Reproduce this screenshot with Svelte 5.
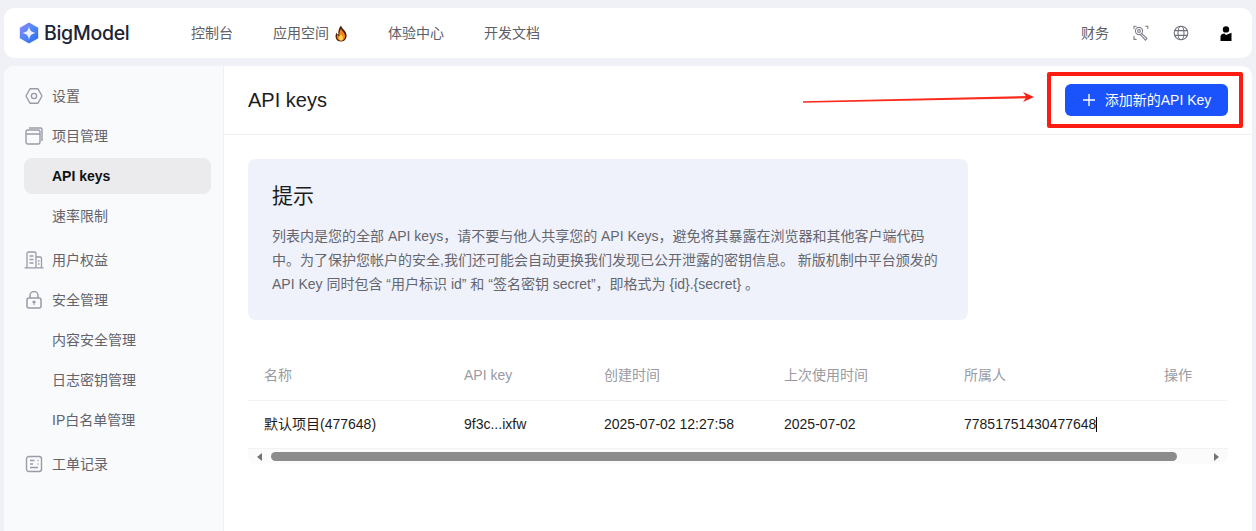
<script lang="ts">
  const nav = ["控制台", "应用空间", "体验中心", "开发文档"];
  const columns = [
    { label: "名称", value: "默认项目(477648)", width: 200 },
    { label: "API key", value: "9f3c...ixfw", width: 140 },
    { label: "创建时间", value: "2025-07-02 12:27:58", width: 180 },
    { label: "上次使用时间", value: "2025-07-02", width: 180 },
    { label: "所属人", value: "77851751430477648", width: 200 },
    { label: "操作", value: "", width: 80 },
  ];
</script>

<div class="page">
  <header class="topbar">
    <div class="logo">
      <svg width="20" height="22" viewBox="0 0 20 22">
        <defs>
          <linearGradient id="logo-grad" x1="0" y1="0" x2="1" y2="1">
            <stop offset="0" stop-color="#8f86fa" />
            <stop offset="0.5" stop-color="#4f86f8" />
            <stop offset="1" stop-color="#2568e6" />
          </linearGradient>
        </defs>
        <path d="M10 0.5 19.2 5.8V16.2L10 21.5 0.8 16.2V5.8Z" fill="url(#logo-grad)" />
        <path d="M10 4C10.600 8.200 12 10 16.500 11 12 12 10.600 13.800 10 18 9.400 13.800 8 12 3.500 11 8 10 9.400 8.200 10 4Z" fill="#eef1ff" />
      </svg>
      <span>BigModel</span>
    </div>
    <nav class="nav">
      {#each nav as item}
        <span class="nav-item">
          {item}
          {#if item === "应用空间"}
            <svg width="14" height="17" viewBox="0 0 14 16" preserveAspectRatio="none">
              <path d="M7 0.5C7.6 3 10 4 11.6 6.6 13.6 9.8 12.8 15.5 7 15.5 1.6 15.5 0.4 10.4 2.6 7 3 8.4 3.6 9 4.4 9.2 4 6 4.8 2.6 7 0.5Z" fill="#4a2208" />
              <path d="M7 3.5C7.6 5.4 9.6 6.4 10.6 8.4 11.8 11 10.6 14.6 7 14.6 3.4 14.6 2.2 11.4 3.4 9 3.9 10 4.6 10.4 5.4 10.4 5 8 5.6 5.4 7 3.5Z" fill="#f5821f" />
              <path d="M7 8.5C7.4 9.8 9 10.6 9 12.4 9 13.6 8.1 14.6 7 14.6 5.7 14.6 4.9 13.6 4.9 12.4 4.9 10.9 6.4 10 7 8.5Z" fill="#ffd23f" />
            </svg>
          {/if}
        </span>
      {/each}
    </nav>
    <div class="top-actions">
      <span>财务</span>
      <svg width="16" height="16" viewBox="0 0 16 16" fill="none" stroke="#7f818c" stroke-width="1.1">
        <circle cx="6" cy="6" r="3.6" />
        <circle cx="6" cy="6" r="1.4" />
        <path d="M8.600 8.400 14 13.600 12.400 15.200 7.400 9.600" />
        <path d="M1 4V1.200H3.600M12 1.200H14.800V4M1 11V14.400H3.600" />
      </svg>
      <svg width="16" height="16" viewBox="0 0 16 16" fill="none" stroke="#6f717c" stroke-width="1.1">
        <circle cx="8" cy="8" r="6.8" />
        <ellipse cx="8" cy="8" rx="3" ry="6.8" />
        <path d="M1.4 5.6H14.6M1.4 10.4H14.6" />
      </svg>
      <svg class="user-icon" width="12" height="15" viewBox="0 0 12 15" fill="#000">
        <circle cx="6" cy="3.4" r="3.2" />
        <path d="M0.5 15V10.500C0.5 8.500 2.600 7.500 4.400 7.500L6 9 11.500 6.800V15Z" />
      </svg>
    </div>
  </header>

  <div class="body">
    <aside class="sidebar">
      <div class="group">
        <div class="side-item">
          <svg width="18" height="18" viewBox="0 0 18 18" fill="none" stroke="#9a9ba8" stroke-width="1.4">
            <path d="M5 1.8H13L17 9 13 16.2H5L1 9Z" stroke-linejoin="round" />
            <circle cx="9" cy="9" r="2.6" />
          </svg>
          <span>设置</span>
        </div>
        <div class="side-item">
          <svg width="18" height="18" viewBox="0 0 18 18" fill="none" stroke="#9a9ba8" stroke-width="1.4">
            <rect x="1" y="3" width="14" height="14" rx="2" />
            <path d="M1 7H15M4 1H15.5A1.5 1.5 0 0 1 17 2.5V14" />
          </svg>
          <span>项目管理</span>
        </div>
        <div class="side-item sub active">API keys</div>
        <div class="side-item sub">速率限制</div>
      </div>
      <div class="group">
        <div class="side-item">
          <svg class="wide-icon" width="20" height="18" viewBox="0 0 20 18" fill="none" stroke="#9a9ba8" stroke-width="1.3">
            <path d="M3 16.5V2.5A1.5 1.5 0 0 1 4.5 1H10.5A1.5 1.5 0 0 1 12 2.5V16.5M12 6H16A1.5 1.5 0 0 1 17.5 7.5V16.5M0.5 16.8H19.5" />
            <path d="M5.5 5H9.5M5.5 8.500H9.5M5.500 12H9.500M14 10H15.500M14 13H15.500" />
          </svg>
          <span>用户权益</span>
        </div>
        <div class="side-item">
          <svg width="18" height="18" viewBox="0 0 18 18" fill="none" stroke="#9a9ba8" stroke-width="1.5">
            <rect x="2" y="7" width="14" height="10" rx="2" />
            <path d="M5 7V4.600A4 4 0 0 1 13 4.600V7" />
            <path d="M9 10V14M7.500 11.500 9 10 10.500 11.500" stroke-width="1.2" />
          </svg>
          <span>安全管理</span>
        </div>
        <div class="side-item sub">内容安全管理</div>
        <div class="side-item sub">日志密钥管理</div>
        <div class="side-item sub">IP白名单管理</div>
      </div>
      <div class="group">
        <div class="side-item">
          <svg width="18" height="18" viewBox="0 0 18 18" fill="none" stroke="#9a9ba8" stroke-width="1.4">
            <rect x="1.500" y="1.500" width="15" height="15" rx="2.500" />
            <path d="M5 5.500H9.500M5 9H8M5 12.500H13M12.500 5.500H13.500M12.500 9H13.500" />
          </svg>
          <span>工单记录</span>
        </div>
      </div>
    </aside>

    <main class="main">
      <div class="main-head">
        <h1>API keys</h1>
        <button class="add-btn">
          <svg width="14" height="14" viewBox="0 0 14 14" stroke="#fff" stroke-width="1.400">
            <path d="M7 1V13M1 7H13" />
          </svg>
          添加新的API Key
        </button>
      </div>

      <div class="content">
        <section class="tip">
          <h2>提示</h2>
          <p>
            列表内是您的全部 API keys，请不要与他人共享您的 API Keys，避免将其暴露在浏览器和其他客户端代码中。为了保护您帐户的安全,我们还可能会自动更换我们发现已公开泄露的密钥信息。 新版机制中平台颁发的 API Key 同时包含 “用户标识 id” 和 “签名密钥 secret”，即格式为 {"{id}.{secret}"} 。
          </p>
        </section>

        <div class="table">
          <div class="row head">
            {#each columns as col}
              <div class="cell" style="width: {col.width}px">{col.label}</div>
            {/each}
          </div>
          <div class="row data">
            {#each columns as col}
              <div class="cell" style="width: {col.width}px">
                {col.value}{#if col.label === "所属人"}<i class="caret"></i>{/if}
              </div>
            {/each}
          </div>
          <div class="scrollbar">
            <span class="arrow left"></span>
            <div class="track"><div class="thumb"></div></div>
            <span class="arrow right"></span>
          </div>
        </div>
      </div>
    </main>
  </div>

  <div class="mark-box"></div>
  <svg class="mark-arrow" width="240" height="20" viewBox="0 0 240 20">
    <path d="M2 14.300 228 9V11.200L2 15.700Z" fill="#fb2a1c" />
    <path d="M222 5 233 10 222 15 225.500 10Z" fill="#fb1c12" />
  </svg>
</div>

<style>
  :global(body) {
    margin: 0;
    background: #f0f1f6;
    font-family: "Liberation Sans", "Noto Sans CJK SC", sans-serif;
  }

  .page {
    position: relative;
    height: 531px;
    overflow: hidden;
    padding: 8px 4px 0;
    box-sizing: border-box;
    display: flex;
    flex-direction: column;
    gap: 8px;
  }

  .topbar {
    height: 50px;
    flex-shrink: 0;
    background: #fff;
    border-radius: 10px;
    display: flex;
    align-items: center;
    padding: 0 20px 0 15px;
  }

  .logo {
    width: 172px;
    display: flex;
    align-items: center;
    gap: 5px;
    font-family: Inter, sans-serif;
    font-size: 19.5px;
    font-weight: 500;
    letter-spacing: -0.3px;
    color: #1d2433;
  }

  .nav {
    display: flex;
    gap: 40px;
    font-size: 14px;
    line-height: 20px;
    color: #5e5e66;
  }

  .nav-item {
    display: flex;
    align-items: center;
    gap: 5px;
  }

  .top-actions {
    margin-left: auto;
    display: flex;
    align-items: center;
    gap: 24px;
    font-size: 14px;
    line-height: 20px;
    color: #5e5e66;
  }

  .user-icon {
    margin-left: 7px;
  }

  .body {
    flex: 1;
    display: flex;
    min-height: 0;
    background: #fff;
    border-radius: 10px 10px 0 0;
    overflow: hidden;
  }

  .sidebar {
    width: 220px;
    flex-shrink: 0;
    box-sizing: border-box;
    background: #f9fafc;
    border-right: 1px solid #f0f1f5;
    padding: 12px 12px 0 20px;
    display: flex;
    flex-direction: column;
    gap: 8px;
  }

  .group {
    display: flex;
    flex-direction: column;
    gap: 4px;
  }

  .side-item {
    height: 36px;
    display: flex;
    align-items: center;
    gap: 9px;
    padding-left: 1px;
    font-size: 14px;
    line-height: 20px;
    color: #63636b;
  }

  .side-item svg {
    flex-shrink: 0;
  }

  .side-item svg.wide-icon {
    margin: 0 -1px;
  }

  .side-item.sub {
    padding-left: 28px;
  }

  .side-item.active {
    background: #ebebed;
    border-radius: 8px;
    color: #111;
    font-weight: 700;
  }

  .main {
    flex: 1;
    min-width: 0;
  }

  .main-head {
    height: 69px;
    box-sizing: border-box;
    border-bottom: 1px solid #f2f2f4;
    display: flex;
    align-items: center;
    justify-content: space-between;
    padding: 0 24px;
  }

  h1 {
    margin: 0;
    font-size: 20px;
    font-weight: 400;
    color: #1c1c20;
  }

  .add-btn {
    width: 163px;
    height: 32px;
    border: none;
    border-radius: 6px;
    background: #1a53fb;
    color: #fff;
    font: inherit;
    font-size: 14px;
    line-height: 20px;
    display: flex;
    align-items: center;
    justify-content: center;
    gap: 9px;
  }

  .content {
    padding: 24px 24px 0;
  }

  .tip {
    width: 720px;
    height: 161px;
    box-sizing: border-box;
    background: #eff2fb;
    border-radius: 8px;
    padding: 24px;
  }

  h2 {
    margin: 0 0 15px;
    font-size: 21px;
    line-height: 26px;
    font-weight: 400;
    color: #1c1c20;
  }

  .tip p {
    margin: 0;
    font-size: 14px;
    line-height: 24px;
    color: #66666e;
    text-spacing-trim: space-all;
  }

  .table {
    margin-top: 30px;
    width: 980px;
    overflow: hidden;
  }

  .row {
    display: flex;
    border-bottom: 1px solid #f3f3f5;
    box-sizing: border-box;
    font-size: 14px;
    line-height: 20px;
  }

  .row.head {
    height: 51px;
    align-items: center;
    color: #9a9aa2;
  }

  .row.data {
    height: 48px;
    padding-bottom: 2px;
    align-items: center;
    color: #1c1c20;
  }

  .cell {
    flex-shrink: 0;
    box-sizing: border-box;
    padding-left: 16px;
    white-space: nowrap;
  }

  .caret {
    display: inline-block;
    width: 1px;
    height: 15px;
    background: #000;
    vertical-align: -3px;
  }

  .scrollbar {
    height: 15px;
    display: flex;
    align-items: center;
    background: #fbfbfb;
    border-radius: 0 0 8px 8px;
    padding: 0 9px 0 9px;
    gap: 9px;
  }

  .track {
    flex: 1;
  }

  .thumb {
    width: 906px;
    height: 9px;
    border-radius: 5px;
    background: #8c8c8c;
  }

  .arrow {
    width: 0;
    height: 0;
    border-top: 4px solid transparent;
    border-bottom: 4px solid transparent;
  }

  .arrow.left {
    border-right: 5px solid #737373;
  }

  .arrow.right {
    border-left: 5px solid #737373;
  }

  /* red annotation drawn over the screenshot */
  .mark-box {
    position: absolute;
    left: 1047px;
    top: 72px;
    width: 196px;
    height: 56px;
    box-sizing: border-box;
    border: 4px solid #fb1c12;
    border-radius: 2px;
  }

  .mark-arrow {
    position: absolute;
    left: 801px;
    top: 87px;
  }
</style>
